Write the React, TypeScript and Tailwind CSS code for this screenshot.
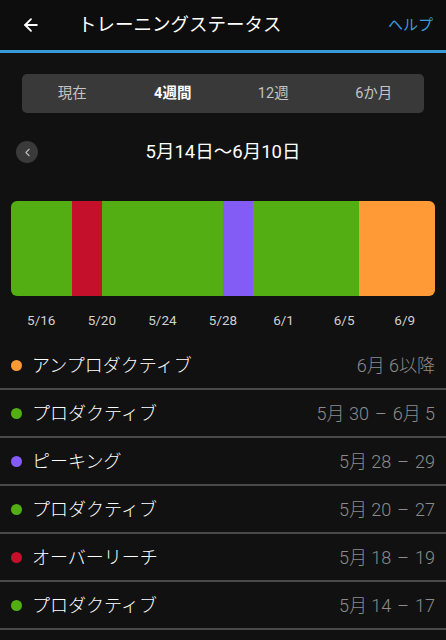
import { ArrowLeft, ChevronLeft } from 'lucide-react';

const font = { fontFamily: "Roboto, 'Noto Sans CJK JP', sans-serif" };

const tabs = ['現在', '4週間', '12週', '6か月'];

// days per segment, 5/14 → 6/10
const segments = [
  { days: 4, color: 'bg-[#52ae12]' },
  { days: 2, color: 'bg-[#c4102a]' },
  { days: 8, color: 'bg-[#52ae12]' },
  { days: 2, color: 'bg-[#835cf6]' },
  { days: 7, color: 'bg-[#52ae12]' },
  { days: 5, color: 'bg-[#ff9a36]' },
];

const ticks = ['5/16', '5/20', '5/24', '5/28', '6/1', '6/5', '6/9'];

const rows = [
  { label: 'アンプロダクティブ', from: '6月 6以降', to: '', dot: 'bg-[#ff9a36]' },
  { label: 'プロダクティブ', from: '5月 30', to: '6月 5', dot: 'bg-[#52ae12]' },
  { label: 'ピーキング', from: '5月 28', to: '29', dot: 'bg-[#835cf6]' },
  { label: 'プロダクティブ', from: '5月 20', to: '27', dot: 'bg-[#52ae12]' },
  { label: 'オーバーリーチ', from: '5月 18', to: '19', dot: 'bg-[#c4102a]' },
  { label: 'プロダクティブ', from: '5月 14', to: '17', dot: 'bg-[#52ae12]' },
];

export default function App() {
  return (
    <div className="w-[446px] h-[640px] bg-[#111111] text-white overflow-hidden" style={font}>
      {/* Header */}
      <header className="h-[50px] bg-[#0d0d0d] flex items-center pl-[21px] pr-[13px] border-b-[3px] border-[#3a9ad9] box-content">
        <ArrowLeft size={20} strokeWidth={2.2} className="text-white" />
        <h1 className="ml-[37px] text-[18.5px] leading-none">トレーニングステータス</h1>
        <span className="ml-auto text-[15px] text-[#3a9ad9]">ヘルプ</span>
      </header>

      {/* Period tabs */}
      <div className="mx-[22px] mt-[21px] h-[39px] rounded-[5px] bg-[#393939] grid grid-cols-4 items-center">
        {tabs.map((t, i) => (
          <div
            key={t}
            className={
              i === 1
                ? 'text-center text-[14.5px] font-bold text-white'
                : 'text-center text-[14.5px] text-[#c4c4c4]'
            }
          >
            {t}
          </div>
        ))}
      </div>

      {/* Date range */}
      <div className="relative h-[22px] mt-[28px] flex items-center justify-center">
        <div className="absolute left-[16px] top-0 w-[22px] h-[22px] rounded-full bg-[#3a3a3a] flex items-center justify-center">
          <ChevronLeft size={13} strokeWidth={2} className="text-[#bdbdbd]" />
        </div>
        <span className="text-[18.5px] leading-none">5月14日〜6月10日</span>
      </div>

      {/* Chart */}
      <div className="mx-[11px] mt-[38px] h-[95px] rounded-[6px] overflow-hidden flex">
        {segments.map((s, i) => (
          <div key={i} className={s.color} style={{ flexGrow: s.days, flexBasis: 0 }} />
        ))}
      </div>
      <div className="mx-[11px] mt-[15px] grid grid-cols-7 text-[13.5px] text-[#d0d0d0]">
        {ticks.map((t) => (
          <div key={t} className="text-center leading-[18px]">
            {t}
          </div>
        ))}
      </div>

      {/* Legend list */}
      <div className="mt-[13px]">
        {rows.map((r, i) => (
          <div
            key={i}
            className="h-[48px] flex items-center pl-[11px] pr-[11px] border-b-[2px] border-[#4a4a4a] box-border"
          >
            <span className={`w-[11px] h-[11px] rounded-full ${r.dot}`} />
            <span className="ml-[10px] text-[18px] font-light text-white">{r.label}</span>
            <span className="ml-auto text-[18px] font-light text-[#8c8c8c]">
              {r.from}
              {r.to && (
                <>
                  <span className="px-[6px]">–</span>
                  {r.to}
                </>
              )}
            </span>
          </div>
        ))}
      </div>
    </div>
  );
}
